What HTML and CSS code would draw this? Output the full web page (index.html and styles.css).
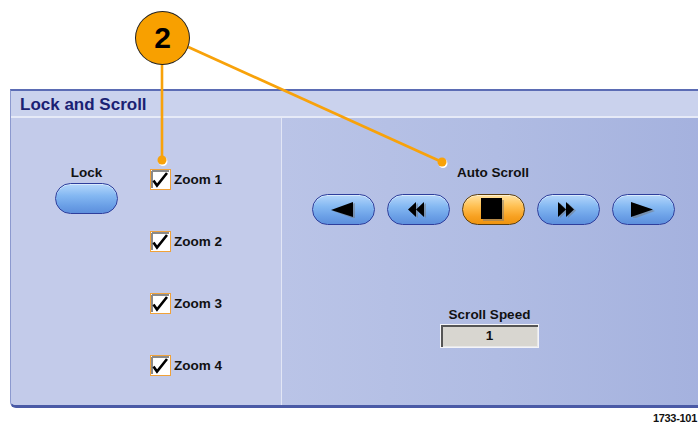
FILE: index.html
```html
<!DOCTYPE html>
<html>
<head>
<meta charset="utf-8">
<link rel="stylesheet" href="styles.css">
</head>
<body>
<div class="page">
  <div class="top-space"></div>
  <section class="panel">
    <header class="panel-title">Lock and Scroll</header>
    <div class="panel-body">
      <div class="left">
        <div class="lock-col">
          <span class="label">Lock</span>
          <button class="pill"></button>
        </div>
        <ul class="zooms">
          <li class="zoom"><span class="check"><svg width="21" height="21" viewBox="0 0 21 21"><rect x="0.5" y="0.5" width="20" height="20" fill="#fff" stroke="#f0a23a"/><path d="M2 2H19M2 2V19" stroke="#8a8a8a" stroke-width="2"/><path d="M3.5 11.5 L7 16.5 L17 4" fill="none" stroke="#000" stroke-width="2.6"/></svg></span><span class="label">Zoom 1</span></li>
          <li class="zoom"><span class="check"><svg width="21" height="21" viewBox="0 0 21 21"><rect x="0.5" y="0.5" width="20" height="20" fill="#fff" stroke="#f0a23a"/><path d="M2 2H19M2 2V19" stroke="#8a8a8a" stroke-width="2"/><path d="M3.5 11.5 L7 16.5 L17 4" fill="none" stroke="#000" stroke-width="2.6"/></svg></span><span class="label">Zoom 2</span></li>
          <li class="zoom"><span class="check"><svg width="21" height="21" viewBox="0 0 21 21"><rect x="0.5" y="0.5" width="20" height="20" fill="#fff" stroke="#f0a23a"/><path d="M2 2H19M2 2V19" stroke="#8a8a8a" stroke-width="2"/><path d="M3.5 11.5 L7 16.5 L17 4" fill="none" stroke="#000" stroke-width="2.6"/></svg></span><span class="label">Zoom 3</span></li>
          <li class="zoom"><span class="check"><svg width="21" height="21" viewBox="0 0 21 21"><rect x="0.5" y="0.5" width="20" height="20" fill="#fff" stroke="#f0a23a"/><path d="M2 2H19M2 2V19" stroke="#8a8a8a" stroke-width="2"/><path d="M3.5 11.5 L7 16.5 L17 4" fill="none" stroke="#000" stroke-width="2.6"/></svg></span><span class="label">Zoom 4</span></li>
        </ul>
      </div>
      <div class="right">
        <div class="scroll-group">
          <span class="label">Auto Scroll</span>
          <div class="controls">
            <button class="pill"><svg width="26" height="16" viewBox="0 0 26 16"><path d="M3 9 L25 1 V17 Z" fill="#777" opacity=".5"/><path d="M1 8 L23 0 V15 Z" fill="#000"/></svg></button>
            <button class="pill"><svg width="20" height="16" viewBox="0 0 20 16"><path d="M2 8.5 L10 1 V16 Z M10 8.5 L18 1 V16 Z" fill="#777" opacity=".5"/><path d="M0 7.5 L8 0 V15 Z M8 7.5 L16 0 V15 Z" fill="#000"/></svg></button>
            <button class="pill active"><svg width="24" height="24" viewBox="0 0 24 24"><rect x="2" y="2" width="21" height="21" fill="#777" opacity=".5"/><rect x="0" y="0" width="21" height="21" fill="#000"/></svg></button>
            <button class="pill"><svg width="20" height="16" viewBox="0 0 20 16"><path d="M2 1 L10 8.5 L2 16 Z M10 1 L18 8.5 L10 16 Z" fill="#777" opacity=".5"/><path d="M0 0 L8 7.5 L0 15 Z M8 0 L16 7.5 L8 15 Z" fill="#000"/></svg></button>
            <button class="pill"><svg width="26" height="16" viewBox="0 0 26 16"><path d="M3 1 L25 9 L3 17 Z" fill="#777" opacity=".5"/><path d="M1 0 L23 7.5 L1 15 Z" fill="#000"/></svg></button>
          </div>
        </div>
        <div class="speed-group">
          <span class="label">Scroll Speed</span>
          <div class="speed-field">1</div>
        </div>
      </div>
    </div>
  </section>
  <div class="fig-id">1733-101</div>

  <svg class="callout-lines" width="698" height="424" viewBox="0 0 698 424">
    <line x1="162" y1="60" x2="162" y2="160" stroke="#f8a20a" stroke-width="2.6"/>
    <line x1="186" y1="46" x2="442" y2="162" stroke="#f8a20a" stroke-width="2.8"/>
    <circle cx="163" cy="161.5" r="4.5" fill="#fff"/>
    <circle cx="162" cy="160" r="4.5" fill="#f8a20a"/>
    <circle cx="443" cy="163.5" r="4.5" fill="#fff"/>
    <circle cx="442" cy="162" r="4.5" fill="#f8a20a"/>
  </svg>
  <div class="callout-badge">2</div>
</div>
</body>
</html>
```

FILE: styles.css
```css
html, body {
  margin: 0;
  padding: 0;
  background: #fff;
  overflow: hidden;
}

.page {
  position: relative;
  width: 698px;
  height: 424px;
  overflow: hidden;
  font-family: "Liberation Sans", Arial, sans-serif;
  color: #111;
}

.top-space {
  height: 89px;
}

.panel {
  margin-left: 10px;
  width: 700px;
  border-top: 2px solid #5b6cb4;
  border-left: 1px solid #8c99cf;
  border-bottom: 3px solid #4a5aa6;
  border-bottom-left-radius: 6px;
  background: #c4cceb;
  overflow: hidden;
}

.panel-title {
  height: 25px;
  padding-left: 9px;
  line-height: 27px;
  font-size: 17px;
  font-weight: bold;
  color: #1a2173;
  background: #cad2ed;
  border-bottom: 2px solid #e6eaf7;
}

.panel-body {
  display: flex;
  height: 287px;
}

.label {
  font-size: 13.5px;
  font-weight: bold;
  line-height: 16px;
  color: #111;
}

.left {
  width: 270px;
  display: flex;
  background: #c3cbea;
  border-right: 1px solid #e2e6f5;
}

.lock-col {
  margin-left: 44px;
  padding-top: 47px;
  display: flex;
  flex-direction: column;
  align-items: center;
  width: 63px;
}

.lock-col .label {
  margin-bottom: 2px;
}

.pill {
  width: 63px;
  height: 31px;
  border-radius: 16px;
  border: 1.5px solid #2e3e9c;
  background: linear-gradient(to bottom, #b4d6fb 0%, #84b8f2 40%, #6a9fe6 75%, #5d8fdc 100%);
  box-shadow: inset 0 1px 0 rgba(255,255,255,0.5);
  padding: 0;
  display: flex;
  align-items: center;
  justify-content: center;
}

.pill.active {
  border-color: #5a3e12;
  background: linear-gradient(to bottom, #ffe2a0 0%, #ffbf50 40%, #f7a020 75%, #ee9410 100%);
}

.zooms {
  list-style: none;
  margin: 0 0 0 32px;
  padding: 51px 0 0;
  display: flex;
  flex-direction: column;
  gap: 41px;
}

.zoom {
  display: flex;
  align-items: center;
  height: 21px;
  gap: 3px;
}

.check {
  display: block;
  width: 21px;
  height: 21px;
}

.check svg {
  display: block;
}

.right {
  flex: 1;
  background: linear-gradient(to right, #bac4e7 0%, #b0bce3 50%, #a4b1de 100%);
}

.scroll-group {
  margin-left: 29px;
  width: 364px;
  padding-top: 47px;
  display: flex;
  flex-direction: column;
  align-items: center;
}

.controls {
  margin-top: 13px;
  display: flex;
  gap: 12px;
}

.speed-group {
  margin-left: 158px;
  width: 99px;
  margin-top: 82px;
  display: flex;
  flex-direction: column;
  align-items: center;
}

.speed-group .label {
  margin-bottom: 1px;
  white-space: nowrap;
}

.speed-field {
  box-sizing: border-box;
  width: 99px;
  height: 24px;
  background: #d8d6d0;
  border: 1px solid #f4f4f8;
  box-shadow: inset 2px 2px 0 #555, inset -1px -1px 0 #e8e8e8;
  text-align: center;
  font-size: 13.5px;
  font-weight: bold;
  line-height: 22px;
  color: #111;
}

.fig-id {
  text-align: right;
  margin-right: 1px;
  margin-top: 3px;
  font-size: 11px;
  font-weight: bold;
  line-height: 14px;
  letter-spacing: -0.3px;
  color: #111;
}

.callout-lines {
  position: absolute;
  left: 0;
  top: 0;
  pointer-events: none;
}

.callout-badge {
  position: absolute;
  left: 135px;
  top: 11px;
  width: 53px;
  height: 52px;
  border-radius: 50%;
  border: 1px solid #222;
  background: #f8a000;
  font-size: 30px;
  font-weight: bold;
  line-height: 52px;
  text-align: center;
  color: #000;
}
```
